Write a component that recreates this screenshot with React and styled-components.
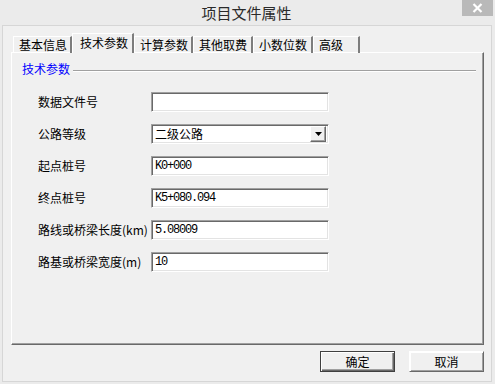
import styled, { createGlobalStyle } from "styled-components";

const GlobalStyle = createGlobalStyle`
  html, body {
    margin: 0;
    padding: 0;
    background: #ebebeb;
  }
  * { box-sizing: border-box; }
`;

const TABS = [
  { label: "基本信息", width: 59 },
  { label: "技术参数", width: 62, active: true },
  { label: "计算参数", width: 59 },
  { label: "其他取费", width: 60 },
  { label: "小数位数", width: 60 },
  { label: "高级", width: 47 },
];

const FIELDS = [
  { label: "数据文件号", value: "" },
  { label: "公路等级", value: "二级公路", select: true },
  { label: "起点桩号", value: "K0+000" },
  { label: "终点桩号", value: "K5+080.094" },
  { label: "路线或桥梁长度(km)", value: "5.08009" },
  { label: "路基或桥梁宽度(m)", value: "10" },
];

function App() {
  return (
    <>
      <GlobalStyle />
      <Window>
        <TitleBar>
          <span />
          <Title>项目文件属性</Title>
          <CloseButton>
            <svg width="11" height="10" viewBox="0 0 11 10">
              <path d="M1.5 1 L9.5 9 M9.5 1 L1.5 9" stroke="#fff" strokeWidth="2.2" />
            </svg>
          </CloseButton>
        </TitleBar>
        <Client>
          <TabStrip>
            {TABS.map((t) => (
              <Tab key={t.label} $width={t.width} $active={t.active}>
                {t.label}
              </Tab>
            ))}
          </TabStrip>
          <Panel>
            <GroupHead>
              <GroupLabel>技术参数</GroupLabel>
              <GroupLine />
            </GroupHead>
            <Form>
              {FIELDS.map((f) => (
                <Row key={f.label}>
                  <Label>{f.label}</Label>
                  {f.select ? (
                    <Field>
                      <FieldText $cjk>{f.value}</FieldText>
                      <DropButton>
                        <svg width="7" height="4" viewBox="0 0 7 4">
                          <path d="M0 0 H7 L3.5 4 Z" fill="#000" />
                        </svg>
                      </DropButton>
                    </Field>
                  ) : (
                    <Field>
                      <FieldText>{f.value}</FieldText>
                    </Field>
                  )}
                </Row>
              ))}
            </Form>
          </Panel>
          <ButtonBar>
            <Button $default>确定</Button>
            <Button>取消</Button>
          </ButtonBar>
        </Client>
      </Window>
    </>
  );
}

const Window = styled.div`
  width: 495px;
  height: 384px;
  display: flex;
  flex-direction: column;
  padding: 0 3px 2px 2px;
  background: #ebebeb;
  font-family: "Noto Sans CJK SC", "Liberation Sans", sans-serif;
  font-size: 12px;
  color: #000;
`;

const TitleBar = styled.div`
  height: 25px;
  display: grid;
  grid-template-columns: 1fr auto 1fr;
  align-items: start;
`;

const Title = styled.div`
  font-size: 15px;
  line-height: 25px;
  color: #2a2a2a;
  margin-right: 1px;
`;

const CloseButton = styled.div`
  justify-self: end;
  width: 31px;
  height: 16px;
  background: #b9b9b9;
  display: flex;
  align-items: center;
  justify-content: center;
  margin-right: -1px;
`;

const Client = styled.div`
  flex: 1;
  display: flex;
  flex-direction: column;
  border: 1px solid #d6d6d6;
  background: #f0f0f0;
  padding: 7px 7px 0 8px;
`;

const TabStrip = styled.div`
  display: flex;
  align-items: flex-end;
  height: 20px;
  padding-left: 2px;
  position: relative;
  z-index: 1;
  margin-bottom: -1px;
`;

const Tab = styled.div`
  width: ${(p) => p.$width}px;
  height: ${(p) => (p.$active ? 20 : 17)}px;
  padding-left: ${(p) => (p.$active ? 7 : 5)}px;
  line-height: ${(p) => (p.$active ? 17 : 16)}px;
  background: #f0f0f0;
  border-top: 1px solid #fff;
  border-left: 1px solid #fff;
  border-right: 2px solid #7d7d7d;
  box-shadow: ${(p) => (p.$active ? "none" : "inset 0 -1px 0 #fff")};
  white-space: nowrap;
`;

const Panel = styled.div`
  width: 473px;
  height: 293px;
  border-top: 1px solid #fff;
  border-left: 1px solid #fff;
  border-right: 1px solid #696969;
  border-bottom: 1px solid #696969;
  box-shadow: inset -1px -1px 0 #a0a0a0;
  padding: 8px 0 0 10px;
`;

const GroupHead = styled.div`
  display: flex;
  align-items: center;
  gap: 3px;
  height: 16px;
`;

const GroupLabel = styled.div`
  color: #0000ff;
  line-height: 16px;
  white-space: nowrap;
  flex-shrink: 0;
`;

const GroupLine = styled.div`
  width: 403px;
  flex-shrink: 0;
  height: 2px;
  border-top: 1px solid #a0a0a0;
  border-bottom: 1px solid #fff;
  margin-top: 3px;
`;

const Form = styled.div`
  display: flex;
  flex-direction: column;
  gap: 12px;
  padding: 15px 0 0 16px;
`;

const Row = styled.div`
  display: grid;
  grid-template-columns: 113px 178px;
  align-items: center;
  height: 20px;
`;

const Label = styled.div`
  white-space: nowrap;
  line-height: 20px;
`;

const Field = styled.div`
  height: 20px;
  background: #fff;
  border-top: 1px solid #a0a0a0;
  border-left: 1px solid #a0a0a0;
  border-right: 1px solid #fff;
  border-bottom: 1px solid #fff;
  box-shadow: inset 1px 1px 0 #696969, inset -1px -1px 0 #e3e3e3;
  display: flex;
  align-items: center;
  justify-content: space-between;
  padding: 0 2px 0 3px;
`;

const FieldText = styled.span`
  font-family: ${(p) =>
    p.$cjk ? `"Noto Sans CJK SC", sans-serif` : `"Liberation Mono", monospace`};
  font-size: 12px;
  letter-spacing: ${(p) => (p.$cjk ? 0 : -1.2)}px;
  line-height: 16px;
`;

const DropButton = styled.div`
  width: 16px;
  height: 16px;
  background: #f0f0f0;
  border-top: 1px solid #fff;
  border-left: 1px solid #fff;
  border-right: 1px solid #696969;
  border-bottom: 1px solid #696969;
  box-shadow: inset -1px -1px 0 #a0a0a0;
  display: flex;
  align-items: center;
  justify-content: center;
`;

const ButtonBar = styled.div`
  display: flex;
  justify-content: flex-end;
  gap: 14px;
  padding: 6px 0 0 0;
`;

const Button = styled.div`
  width: 75px;
  height: 21px;
  background: #f0f0f0;
  border: 1px solid ${(p) => (p.$default ? "#404040" : "#f0f0f0")};
  box-shadow: ${(p) =>
    p.$default
      ? "inset 1px 1px 0 #fff, inset -1px -1px 0 #696969, inset -2px -2px 0 #a0a0a0"
      : "inset 1px 1px 0 #fff, inset -1px -1px 0 #a0a0a0"};
  ${(p) => (p.$default ? "" : "border-right-color:#696969;border-bottom-color:#696969;border-top-color:#fff;border-left-color:#fff;")}
  display: flex;
  align-items: center;
  justify-content: center;
  font-size: 12px;
  line-height: 19px;
`;

export default App;
